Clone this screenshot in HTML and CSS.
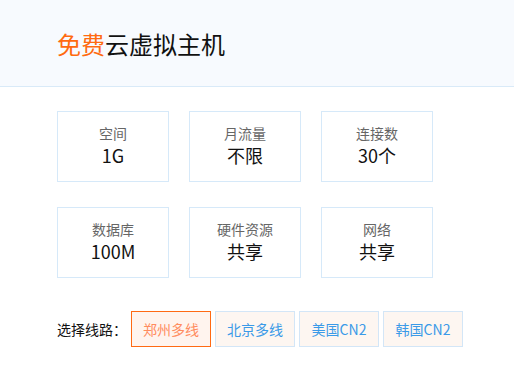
FILE: index.html
```html
<!DOCTYPE html>
<html lang="zh-CN">
<head>
  <meta charset="UTF-8">
  <meta name="viewport" content="width=device-width, initial-scale=1.0">
  <title>免费云虚拟主机</title>
  <link rel="stylesheet" href="styles.css">
</head>
<body>
  <header class="head">
    <h1><span class="free">免费</span>云虚拟主机</h1>
  </header>
  <main class="content">
    <div class="specs">
      <div class="spec"><span class="label">空间</span><span class="value">1G</span></div>
      <div class="spec"><span class="label">月流量</span><span class="value">不限</span></div>
      <div class="spec"><span class="label">连接数</span><span class="value">30个</span></div>
      <div class="spec"><span class="label">数据库</span><span class="value">100M</span></div>
      <div class="spec"><span class="label">硬件资源</span><span class="value">共享</span></div>
      <div class="spec"><span class="label">网络</span><span class="value">共享</span></div>
    </div>
    <div class="lines">
      <span class="lines-title">选择线路：</span>
      <button class="line active">郑州多线</button>
      <button class="line">北京多线</button>
      <button class="line">美国CN2</button>
      <button class="line">韩国CN2</button>
    </div>
  </main>
</body>
</html>
```

FILE: styles.css
```css
body {
  margin: 0;
  font-family: "Noto Sans CJK SC", "Liberation Sans", sans-serif;
  background: #fff;
  color: #111;
}
.head {
  height: 86px;
  background: #f7fafe;
  border-bottom: 1px solid #d9eaf8;
  display: flex;
  align-items: center;
  padding-left: 57px;
}
.head h1 {
  margin: 0;
  font-size: 24px;
  font-weight: normal;
  color: #111;
}
.free {
  color: #ff6a10;
}
.content {
  padding: 24px 0 0 57px;
}
.specs {
  display: grid;
  grid-template-columns: repeat(3, 112px);
  grid-auto-rows: 71px;
  column-gap: 20px;
  row-gap: 25px;
}
.spec {
  box-sizing: border-box;
  border: 1px solid #d6e9f9;
  display: flex;
  flex-direction: column;
  align-items: center;
  padding-top: 11px;
}
.label {
  font-size: 14px;
  line-height: 20px;
  color: #666;
}
.value {
  font-size: 18px;
  line-height: 24px;
  color: #111;
}
.lines {
  display: flex;
  align-items: center;
  gap: 4px;
  margin-top: 33px;
}
.lines-title {
  font-size: 14px;
  width: 70px;
  white-space: nowrap;
  color: #111;
}
.line {
  box-sizing: border-box;
  width: 80px;
  height: 36px;
  padding: 0;
  font-family: inherit;
  font-size: 14px;
  border: 1px solid #d3e6f7;
  background: #fdf6f1;
  color: #3a9ae8;
  cursor: pointer;
}
.line.active {
  border-color: #ff6a13;
  background: #fff4ee;
  color: #ff8c5e;
}
```
